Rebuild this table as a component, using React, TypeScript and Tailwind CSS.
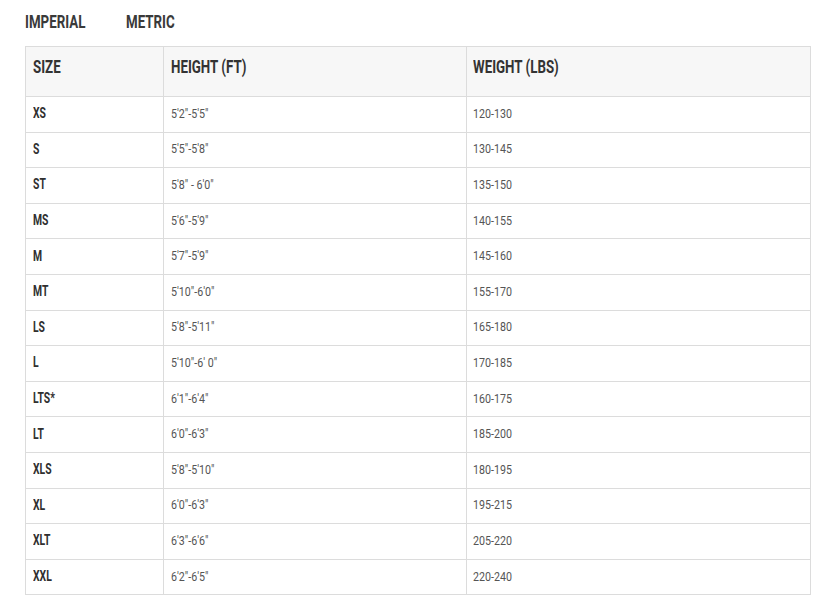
const ROWS = [
  ["XS", "5'2\"-5'5\"", "120-130"],
  ["S", "5'5\"-5'8\"", "130-145"],
  ["ST", "5'8\" - 6'0\"", "135-150"],
  ["MS", "5'6\"-5'9\"", "140-155"],
  ["M", "5'7\"-5'9\"", "145-160"],
  ["MT", "5'10\"-6'0\"", "155-170"],
  ["LS", "5'8\"-5'11\"", "165-180"],
  ["L", "5'10\"-6' 0\"", "170-185"],
  ["LTS*", "6'1\"-6'4\"", "160-175"],
  ["LT", "6'0\"-6'3\"", "185-200"],
  ["XLS", "5'8\"-5'10\"", "180-195"],
  ["XL", "6'0\"-6'3\"", "195-215"],
  ["XLT", "6'3\"-6'6\"", "205-220"],
  ["XXL", "6'2\"-6'5\"", "220-240"],
];

// narrow display face isn't installed, so squeeze Roboto horizontally
function Narrow({ children, wide }: { children: React.ReactNode; wide?: boolean }) {
  return (
    <span className={wide ? "inline-block origin-left scale-x-[0.82]" : "inline-block origin-left scale-x-[0.74]"}>
      {children}
    </span>
  );
}

export default function App() {
  return (
    <div className="w-[827px] h-[606px] bg-white px-[25px] text-[#333] [font-family:Roboto,'Liberation_Sans',sans-serif]">
      <div className="flex h-[46px] items-center pb-[2px] text-[18px] font-bold leading-none text-[#3a3a3a]">
        <span className="w-[101px]">
          <Narrow>IMPERIAL</Narrow>
        </span>
        <span>
          <Narrow>METRIC</Narrow>
        </span>
      </div>
      <table className="w-[786px] table-fixed border-collapse">
        <colgroup>
          <col className="w-[138px]" />
          <col className="w-[303px]" />
          <col />
        </colgroup>
        <thead>
          <tr className="h-[50px] bg-[#f7f7f7] text-left text-[18px] font-bold leading-none">
            <th className="border border-[#dcdcdc] px-[7px] pb-[10px] align-middle"><Narrow>SIZE</Narrow></th>
            <th className="border border-[#dcdcdc] px-[7px] pb-[10px] align-middle"><Narrow>HEIGHT (FT)</Narrow></th>
            <th className="border border-[#dcdcdc] px-[6px] pb-[10px] align-middle"><Narrow>WEIGHT (LBS)</Narrow></th>
          </tr>
        </thead>
        <tbody>
          {ROWS.map(([size, height, weight]) => (
            <tr key={size} className="h-[35.6px] text-[13px] leading-none">
              <td className="border border-[#dcdcdc] px-[7px] pb-[2px] text-[14px] font-bold text-[#2f2f2f]"><Narrow>{size}</Narrow></td>
              <td className="border border-[#dcdcdc] px-[7px] pb-[2px] text-[#555]"><Narrow wide>{height}</Narrow></td>
              <td className="border border-[#dcdcdc] px-[6px] pb-[2px] text-[#555]"><Narrow wide>{weight}</Narrow></td>
            </tr>
          ))}
        </tbody>
      </table>
    </div>
  );
}
